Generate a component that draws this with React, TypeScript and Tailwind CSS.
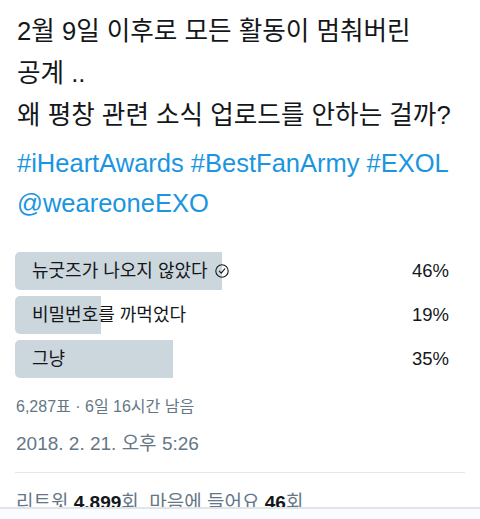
type PollOption = {
  label: string;
  percent: number;
  chosen?: boolean;
};

const options: PollOption[] = [
  { label: "뉴굿즈가 나오지 않았다", percent: 46, chosen: true },
  { label: "비밀번호를 까먹었다", percent: 19 },
  { label: "그냥", percent: 35 },
];

const font = { fontFamily: '"Liberation Sans", "Noto Sans CJK KR", sans-serif' };

const CheckCircle = () => (
  <svg width="14" height="14" viewBox="0 0 14 14" className="ml-[7px] shrink-0">
    <circle cx="7" cy="7" r="6.2" fill="none" stroke="#14171a" strokeWidth="1.1" />
    <path d="M4.3 7.2 L6.2 9.1 L9.8 4.9" fill="none" stroke="#14171a" strokeWidth="1.1" strokeLinecap="round" strokeLinejoin="round" />
  </svg>
);

export default function App() {
  return (
    <main className="w-[480px] h-[519px] bg-white overflow-hidden flex flex-col" style={font}>
      <div className="px-[17px] pt-[10px]">
        <p className="text-[25.6px] leading-[42px] text-[#14171a]">
          2월 9일 이후로 모든 활동이 멈춰버린
          <br />
          공계 ..
          <br />
          왜 평창 관련 소식 업로드를 안하는 걸까?
        </p>
        <p className="mt-[7px] text-[25.5px] leading-[40px] text-[#1b95e0]">
          #iHeartAwards #BestFanArmy #EXOL
          <br />
          @weareoneEXO
        </p>
      </div>

      <section className="mt-[29px] pl-[15px] pr-[15px] flex flex-col gap-[6px]">
        {options.map((item, index) => (
          <div key={index} className="relative h-[38px] flex items-center">
            <div
              className="absolute left-0 top-0 h-full bg-[#ccd6dd] rounded-l-[5px]"
              style={{ width: `${item.percent}%` }}
            />
            <div className="relative flex items-center pl-[17px] text-[18px] text-[#14171a]">
              {item.label}
              {item.chosen && <CheckCircle />}
            </div>
            <div className="relative ml-auto pr-[16px] text-[18.5px] text-[#14171a]">
              {item.percent}%
            </div>
          </div>
        ))}
      </section>

      <p className="mt-[19px] px-[16px] text-[16px] leading-[20px] text-[#657786]">
        6,287표 · 6일 16시간 남음
      </p>
      <p className="mt-[15px] px-[16px] text-[19px] leading-[24px] text-[#657786]">
        2018. 2. 21. 오후 5:26
      </p>

      <div className="mt-[16px] mx-[15px] border-t border-[#e1e8ed]" />

      <div className="h-[34px] overflow-hidden px-[16px] pt-[18px]">
        <p className="text-[19px] leading-[24px] text-[#657786]">
          리트윗 <span className="font-bold text-[#14171a]">4,899</span>회&nbsp; 마음에 들어요{" "}
          <span className="font-bold text-[#14171a]">46</span>회
        </p>
      </div>
      <div className="flex-1 border-t-2 border-[#e1e4e8] bg-[#fbfcfd]" />
    </main>
  );
}
